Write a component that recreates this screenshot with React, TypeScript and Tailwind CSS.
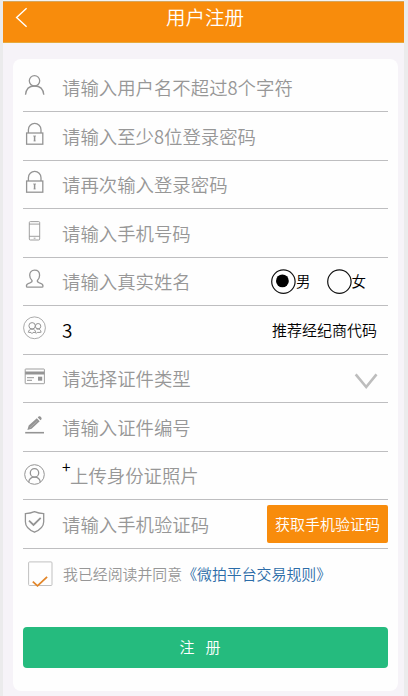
import type { ReactNode } from "react";

function RowIcon({ children }: { children: ReactNode }) {
  return (
    <svg
      className="h-12 w-[39px] shrink-0"
      viewBox="0 0 39 48"
      fill="none"
      stroke="#949494"
      strokeWidth="1.3"
    >
      {children}
    </svg>
  );
}

function Row({ icon, children }: { icon: ReactNode; children: ReactNode }) {
  return (
    <div className="flex h-[48.5px] items-center border-b border-[#bebec0]">
      <RowIcon>{icon}</RowIcon>
      {children}
    </div>
  );
}

function Hint({ children }: { children: ReactNode }) {
  return (
    <span className="whitespace-nowrap text-[18.4px] leading-6 font-[350] text-[#979797]">
      {children}
    </span>
  );
}

function Radio({ label, checked }: { label: string; checked?: boolean }) {
  return (
    <div className="flex items-center">
      <svg className="size-[25px]" viewBox="0 0 25 25" fill="none">
        <circle cx="12.4" cy="12.6" r="11.7" stroke="#111" strokeWidth="1.2" />
        {checked && <circle cx="11.4" cy="11.9" r="6.4" fill="#000" />}
      </svg>
      <span className="text-[14.5px] leading-6 font-[350] text-black">{label}</span>
    </div>
  );
}

const user = (
  <>
    <circle cx="11.5" cy="17.8" r="5.2" />
    <path d="M2.5 31.8C3 26 6.5 23 11.5 23S20.3 26 20.8 31.8" />
  </>
);

const lock = (
  <>
    <rect x="3.6" y="21" width="16.2" height="11.2" />
    <path d="M5.4 21v-3.3a6.3 6.3 0 0 1 12.6 0V21" />
    <path d="M11.6 24v5" strokeWidth="1.5" />
    <path d="M10.2 24h2.8M10.6 29h2" strokeWidth=".8" />
  </>
);

const phone = (
  <g strokeWidth=".9">
    <rect x="6.3" y="12.6" width="10.4" height="18.4" rx="1" />
    <path d="M6.3 15.1h10.4M6.3 27.3h10.4M10.7 29.2h1.8" />
  </g>
);

const bust = (
  <path d="M11.6 13.2c-3.2 0-4.9 2.1-4.9 5 0 2.3.9 4 2.3 5.2.4 1.4-.5 1.9-2 2.4-2.1.6-3.6 1.2-3.6 3.1 0 .9.3 1.3 1 1.3h14.5c.8 0 1.1-.4 1.1-1.3 0-1.9-1.5-2.5-3.6-3.1-1.5-.5-2.4-1-2-2.4 1.4-1.2 2.2-2.9 2.2-5.2 0-2.9-1.8-5-5-5Z" />
);

const group = (
  <g strokeWidth=".8">
    <circle cx="11.5" cy="21.8" r="10.9" />
    <circle cx="9.1" cy="19.8" r="3.2" strokeWidth="1" />
    <circle cx="15.1" cy="20.2" r="2.7" strokeWidth="1" />
    <path
      d="M5.3 26.7c.2-2.2 1.4-3.6 3.7-3.6 2.4 0 3.5 1.4 3.8 3.6M13.6 23.1c2.7-.6 4.2.8 4.5 3.2M6 26.4h2l1 1.2 1-1.2h2.2l1.1 1 1-1h3.5"
      strokeWidth="1"
    />
  </g>
);

const card = (
  <>
    <rect x="2.2" y="15" width="19.2" height="14.7" rx=".5" strokeWidth=".9" />
    <path d="M2.2 19h19.2" strokeWidth="3" />
    <path d="M4 23.7h7M4 26.3h5" strokeWidth="1" />
    <rect x="15" y="22.7" width="4.2" height="4" fill="#949494" stroke="none" />
  </>
);

const pencil = (
  <>
    <path d="M2.2 29.7h18.8" strokeWidth="1.6" />
    <path
      d="M4.4 27.1l1.3-4.5 8.1-7.4 2.9 3.1-8.1 7.4ZM14.7 14.4l.9-.8c.6-.5 1.2-.5 1.8 0l.9 1c.5.6.5 1.2 0 1.8l-.8.8Z"
      fill="#949494"
      stroke="none"
    />
    <path d="M6.9 24.8l7.4-6.7" stroke="#d4d4d4" strokeWidth=".4" />
  </>
);

const portrait = (
  <>
    <circle cx="11.5" cy="23.5" r="9.8" strokeWidth="1" />
    <circle cx="11.5" cy="21.9" r="4.2" />
    <path d="M5.7 31.3c.4-3.5 2.4-5.2 5.8-5.2s5.4 1.7 5.8 5.2" />
  </>
);

const shield = (
  <>
    <path d="M11.5 11.7c-2.8 1.2-5.8 1.8-9.1 1.9v8.1c0 5.2 4 8.3 9.1 10.5 5.1-2.2 9.2-5.3 9.2-10.5v-8.1c-3.4-.1-6.4-.7-9.2-1.9Z" />
    <path d="M6 20.7l4.5 4.3 7.2-7.2" strokeWidth="1.8" />
  </>
);

export default function App() {
  return (
    <div className="h-[696px] w-[408px] overflow-hidden bg-[#ebebec] pr-1 pl-[3px] font-['Noto_Sans_CJK_SC',sans-serif]">
      <div className="flex h-full flex-col bg-[#f6f3f8]">
        <div className="h-px bg-[#f4f4f4]" />
        <header className="grid h-[42px] grid-cols-[60px_1fr_60px] border-t border-b border-t-[#d5a65e] border-b-[#e6aa3d] bg-[#f88c0c]">
          <svg
            className="mt-1 ml-3 h-[24px] w-[14px]"
            viewBox="0 0 14 24"
            fill="none"
            stroke="#fff"
            strokeWidth="1.4"
          >
            <path d="M11.6 2.2L1.6 11.5l10 9.3" />
          </svg>
          <h1 className="pt-[2px] pl-[3px] text-center text-[19.5px] leading-[26px] font-[350] text-white">
            用户注册
          </h1>
        </header>

        <main className="mt-4 mr-[6px] ml-[10px] flex h-[632px] flex-col rounded-lg bg-[#fefefe] pt-[4.5px] pr-[10px] pl-[10px]">
          <Row icon={user}>
            <Hint>请输入用户名不超过8个字符</Hint>
          </Row>
          <Row icon={lock}>
            <Hint>请输入至少8位登录密码</Hint>
          </Row>
          <Row icon={lock}>
            <Hint>请再次输入登录密码</Hint>
          </Row>
          <Row icon={phone}>
            <Hint>请输入手机号码</Hint>
          </Row>
          <Row icon={bust}>
            <Hint>请输入真实姓名</Hint>
            <div className="mr-[22px] ml-auto flex gap-4">
              <Radio label="男" checked />
              <Radio label="女" />
            </div>
          </Row>
          <Row icon={group}>
            <span className="text-[19px] leading-6 font-[350] text-black">3</span>
            <span className="mr-[11px] ml-auto text-[15px] leading-6 font-[350] text-black">
              推荐经纪商代码
            </span>
          </Row>
          <Row icon={card}>
            <Hint>请选择证件类型</Hint>
            <svg
              className="mt-[5px] mr-[10px] ml-auto h-[18px] w-6"
              viewBox="0 0 24 18"
              fill="none"
              stroke="#bdbdbd"
              strokeWidth="2.6"
            >
              <path d="M1.7 2.4L12.2 15 22.5 2.4" />
            </svg>
          </Row>
          <Row icon={pencil}>
            <Hint>请输入证件编号</Hint>
          </Row>
          <Row icon={portrait}>
            <span className="mb-[18px] w-2 text-[15.5px] leading-4 font-[350] text-black">+</span>
            <Hint>上传身份证照片</Hint>
          </Row>
          <Row icon={shield}>
            <Hint>请输入手机验证码</Hint>
            <button className="ml-auto h-[38px] w-[121px] rounded-[2px] bg-[#f88c0c] text-[15px] leading-6 font-[350] whitespace-nowrap text-white">
              获取手机验证码
            </button>
          </Row>

          <div className="mt-3 flex h-[26px] items-center">
            <svg
              className="ml-[5px] h-[26px] w-[35px] shrink-0"
              viewBox="0 0 35 26"
              fill="none"
            >
              <rect x=".6" y=".9" width="23.4" height="23.6" rx="1" stroke="#c0c0c0" />
              <path d="M4.8 20.6l4.7 4.2 9.6-9" stroke="#e2862a" strokeWidth="1.8" />
            </svg>
            <span className="text-[14.9px] leading-6 font-[350] whitespace-nowrap text-[#979797]">
              我已经阅读并同意
              <span className="text-[#2b6ca8]">《微拍平台交易规则》</span>
            </span>
          </div>

          <button className="mt-10 h-[41px] rounded bg-[#25bb7e] pr-[11px] text-[15px] leading-6 font-[350] text-white">
            <span className="mr-[11px]">注</span>
            <span>册</span>
          </button>
        </main>
      </div>
    </div>
  );
}
